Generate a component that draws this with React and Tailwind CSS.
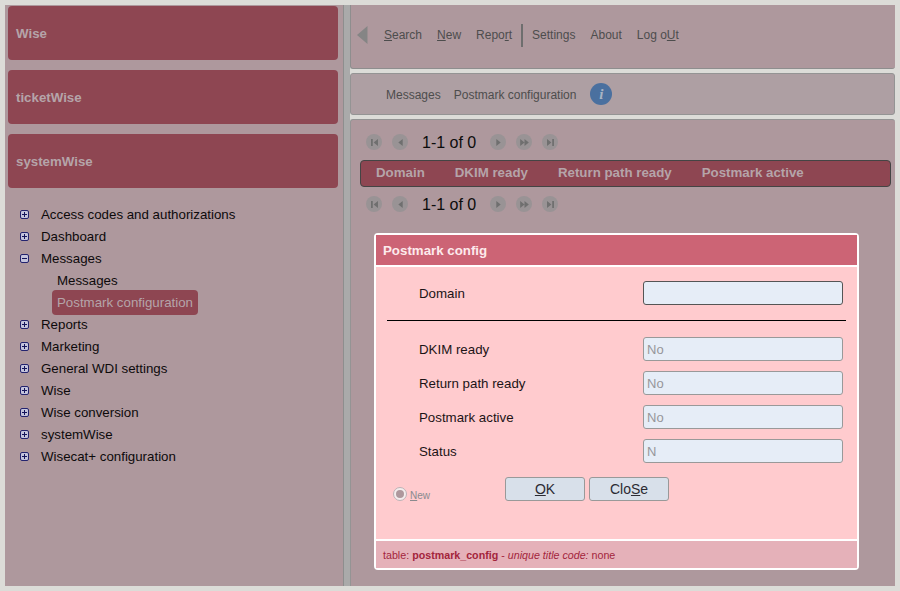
const tree = [
  { label: 'Access codes and authorizations' },
  { label: 'Dashboard' },
  { label: 'Messages', open: true, children: ['Messages', 'Postmark configuration'] },
  { label: 'Reports' },
  { label: 'Marketing' },
  { label: 'General WDI settings' },
  { label: 'Wise' },
  { label: 'Wise conversion' },
  { label: 'systemWise' },
  { label: 'Wisecat+ configuration' },
];

function TreeIcon({ open }) {
  return (
    <svg width="9" height="9" viewBox="0 0 9 9" className="shrink-0">
      <rect x="0.5" y="0.5" width="8" height="8" rx="1.5" fill="#c4c4dc" stroke="#23236e" />
      <path d={open ? 'M2 4.5h5' : 'M2 4.5h5M4.5 2v5'} stroke="#14145a" fill="none" />
    </svg>
  );
}

function PagerButton({ kind }) {
  const paths = {
    first: 'M3.5 3.5h2v8h-2zM11.5 3.5v8l-5-4z',
    prev: 'M10 3.5v8l-5-4z',
    next: 'M5 3.5v8l5-4z',
    fast: 'M2.5 3.5v8l5-4zM7.5 3.5v8l5-4z',
    last: 'M3.5 3.5v8l5-4zM9.5 3.5h2v8h-2z',
  };
  return (
    <span className="flex h-[16px] w-[16px] items-center justify-center rounded-full bg-[#999395]">
      <svg width="13" height="13" viewBox="0 0 15 15">
        <path d={paths[kind]} fill="#6f6f6f" />
      </svg>
    </span>
  );
}

function Pager() {
  return (
    <div className="flex h-[24px] items-center pl-[6px]">
      <div className="flex gap-[10px]">
        <PagerButton kind="first" />
        <PagerButton kind="prev" />
      </div>
      <span className="ml-[14px] w-[68px] pt-px text-[16px] text-[#0c0c0c]">1-1 of 0</span>
      <div className="flex gap-[10px]">
        <PagerButton kind="next" />
        <PagerButton kind="fast" />
        <PagerButton kind="last" />
      </div>
    </div>
  );
}

function Field({ label, value, active }) {
  return (
    <div className="flex h-[24px] items-center justify-between pl-[43px] pr-[14px]">
      <span className="pt-px text-[13.3px] text-[#1c1416]">{label}</span>
      <div
        className={`flex h-[24px] w-[200px] items-center rounded-[3px] border bg-[#e6edf7] px-[3px] pt-px text-[13px] text-[#96969a] ${
          active ? 'border-[#555555]' : 'border-[#999999]'
        }`}
      >
        {value}
      </div>
    </div>
  );
}

export default function App() {
  return (
    <div
      className="flex h-[591px] w-[900px] overflow-hidden bg-[#dcdcd8] p-[5px] text-[13.3px]"
      style={{ fontFamily: '"Liberation Sans", Arial, sans-serif' }}
    >
      {/* Sidebar */}
      <aside className="flex w-[338px] shrink-0 flex-col bg-[#ae989d] pl-[3px] pr-[5px] pt-px">
        {['Wise', 'ticketWise', 'systemWise'].map((name) => (
          <div
            key={name}
            className="mb-[10px] flex h-[54px] items-center rounded-[4px] bg-[#8e4652] pl-[8px] text-[13.3px] font-bold text-[#b5a4a9]"
          >
            <span className="pt-[2px]">{name}</span>
          </div>
        ))}
        <ul className="pl-[12px] pt-[5px]">
          {tree.map((item) => (
            <li key={item.label}>
              <div className="flex h-[22px] items-center text-[#0d0a0b]">
                <span className="flex w-[9px] justify-center">
                  <TreeIcon open={item.open} />
                </span>
                <span className="ml-[12px] pt-[2px]">{item.label}</span>
              </div>
              {item.children &&
                item.children.map((child, i) => (
                  <div key={child} className="flex h-[22px] items-center pl-[32px]">
                    <span
                      className={`flex h-[25px] items-center rounded-[4px] px-[5px] pt-[2px] ${
                        i === 1 ? 'bg-[#8e4652] text-[#b5a4a9]' : 'text-[#0d0a0b]'
                      }`}
                    >
                      {child}
                    </span>
                  </div>
                ))}
            </li>
          ))}
        </ul>
      </aside>

      <div className="w-[7px] shrink-0 bg-[#aaaaaa] border-l border-[#8e8e8e]" />

      {/* Main column */}
      <main className="flex min-w-0 flex-1 flex-col gap-[4px]">
        <div className="flex h-[64px] shrink-0 items-center rounded-b-[3px] border-b border-l border-[#8e8e8e] bg-[#ae989d] pb-[3px] pl-[6px] text-[12px] text-[#4d4d4d]">
          <svg width="11" height="18" viewBox="0 0 11 18" className="shrink-0">
            <path d="M10.5 0v18L0 9z" fill="#858585" />
          </svg>
          <span className="ml-[16px]"><u>S</u>earch</span>
          <span className="ml-[15px]"><u>N</u>ew</span>
          <span className="ml-[15px]">Repo<u>r</u>t</span>
          <span className="ml-[9px] h-[23px] w-[2px] bg-[#6e6e6e]" />
          <span className="ml-[9px]">Settings</span>
          <span className="ml-[15px]">About</span>
          <span className="ml-[15px]">Log o<u>U</u>t</span>
        </div>

        <div className="flex h-[42px] shrink-0 items-center rounded-[3px] border border-[#949494] bg-[#ae9fa3] pl-[35px] text-[12px] text-[#4d4d4d]">
          <span className="pt-[2px]">Messages</span>
          <span className="ml-[13px] pt-[2px]">Postmark configuration</span>
          <span className="ml-[14px] flex h-[22px] w-[22px] items-center justify-center rounded-full bg-[#4a709f]">
            <i className="text-[15px] font-bold text-[#a9b4c4]" style={{ fontFamily: '"Liberation Serif", serif' }}>i</i>
          </span>
        </div>

        <section className="flex min-h-0 flex-1 flex-col rounded-t-[3px] border-l border-t border-[#949494] bg-[#ae989d] pl-[9px] pt-[10px]">
          <Pager />
          <div className="mr-[4px] mt-[6px] flex h-[27px] items-center gap-[30px] rounded-[4px] border-[1.5px] border-[#444444] bg-[#8e4652] pb-[2px] pl-[15px] text-[13.3px] font-bold text-[#b5a4a9]">
            <span>Domain</span>
            <span>DKIM ready</span>
            <span>Return path ready</span>
            <span>Postmark active</span>
          </div>
          <div className="mt-[5px]">
            <Pager />
          </div>

          {/* Dialog */}
          <div className="ml-[14px] mt-[17px] flex h-[337px] w-[485px] flex-col rounded-[4px] border-2 border-white bg-[#ffcbce]">
            <div className="flex h-[32px] shrink-0 items-center border-b-2 border-white bg-[#cc6475] pl-[7px] pt-px text-[13.3px] font-bold text-[#fdeaec]">
              Postmark config
            </div>
            <div className="flex flex-1 flex-col pt-[14px]">
              <Field label="Domain" value="" active />
              <div className="mx-[11px] mb-[16px] mt-[15px] h-px bg-black" />
              <div className="flex flex-col gap-[10px]">
                <Field label="DKIM ready" value="No" />
                <Field label="Return path ready" value="No" />
                <Field label="Postmark active" value="No" />
                <Field label="Status" value="N" />
              </div>
              <div className="mt-[14px] flex items-start">
                <div className="ml-[17px] flex w-[112px] items-center pt-[7px]">
                  <span className="flex h-[14px] w-[14px] shrink-0 items-center justify-center rounded-full border border-[#bdb2b6] bg-[#f3eded]">
                    <span className="h-[8px] w-[8px] rounded-full bg-[#ae989d]" />
                  </span>
                  <span className="ml-[3px] mt-[4px] text-[10px] text-[#8a8a8e]"><u>N</u>ew</span>
                </div>
                <button className="h-[24px] w-[80px] rounded-[3px] border border-[#999999] bg-[#d8e0ea] text-[14px] text-[#2b2b33]"><u>O</u>K</button>
                <button className="ml-[4px] h-[24px] w-[80px] rounded-[3px] border border-[#999999] bg-[#d8e0ea] text-[14px] text-[#2b2b33]">Clo<u>S</u>e</button>
              </div>
            </div>
            <div className="flex h-[29px] shrink-0 items-center border-t-2 border-white bg-[#e5b1b9] pl-[7px] pt-px text-[10.7px] text-[#a3253c]">
              <span>table: <b>postmark_config</b> - <i>unique title code:</i> none</span>
            </div>
          </div>
        </section>
      </main>
    </div>
  );
}
